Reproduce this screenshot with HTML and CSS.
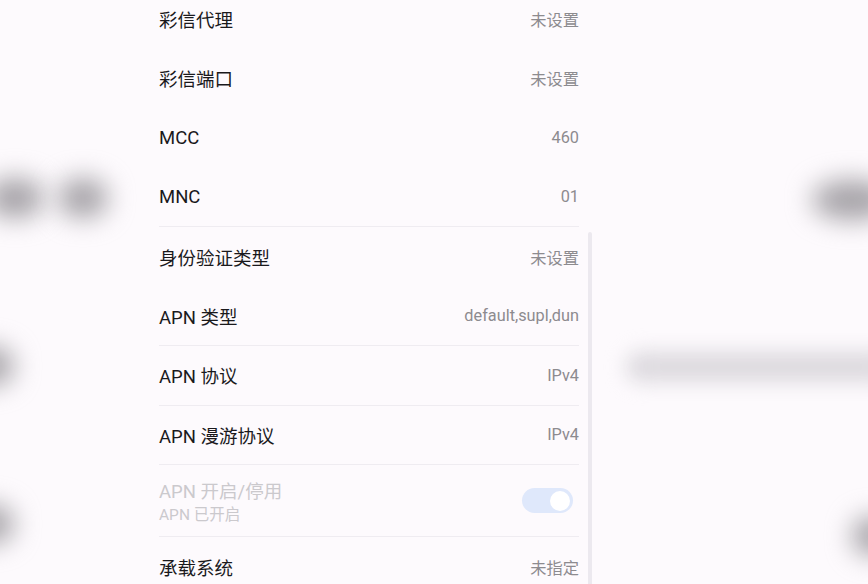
FILE: index.html
```html
<!DOCTYPE html>
<html lang="zh-CN">
<head>
  <meta charset="UTF-8">
  <meta name="viewport" content="width=device-width, initial-scale=1.0">
  <title>APN 设置</title>
  <link rel="stylesheet" href="styles.css">
</head>
<body>
  <!-- blurred zoomed copy behind the phone screen -->
  <div class="backdrop">
    <div class="blob blob-l1a"></div>
    <div class="blob blob-l1b"></div>
    <div class="blob blob-l2"></div>
    <div class="blob blob-l3"></div>
    <div class="blob blob-r1"></div>
    <div class="blob blob-r2 light"></div>
    <div class="blob blob-r3"></div>
  </div>

  <div class="screen">
    <ul class="settings">
      <li class="row">
        <span class="label">彩信代理</span>
        <span class="value">未设置</span>
      </li>
      <li class="row">
        <span class="label">彩信端口</span>
        <span class="value">未设置</span>
      </li>
      <li class="row">
        <span class="label">MCC</span>
        <span class="value">460</span>
      </li>
      <li class="row divided">
        <span class="label">MNC</span>
        <span class="value">01</span>
      </li>
      <li class="row">
        <span class="label">身份验证类型</span>
        <span class="value">未设置</span>
      </li>
      <li class="row divided">
        <span class="label">APN 类型</span>
        <span class="value">default,supl,dun</span>
      </li>
      <li class="row divided">
        <span class="label">APN 协议</span>
        <span class="value">IPv4</span>
      </li>
      <li class="row divided">
        <span class="label">APN 漫游协议</span>
        <span class="value">IPv4</span>
      </li>
      <li class="row tall divided disabled">
        <div class="text">
          <span class="label">APN 开启/停用</span>
          <span class="sub">APN 已开启</span>
        </div>
        <span class="switch on"><span class="knob"></span></span>
      </li>
      <li class="row">
        <span class="label">承载系统</span>
        <span class="value">未指定</span>
      </li>
    </ul>
    <div class="scrollbar"></div>
  </div>
</body>
</html>
```

FILE: styles.css
```css
html, body {
  height: 100%;
}
body {
  margin: 0;
  overflow: hidden;
  background-color: #fdfafd;
  font-family: Roboto, "Noto Sans CJK SC", sans-serif;
  position: relative;
}

/* blurred background smudges */
.backdrop {
  position: absolute;
  inset: 0;
  overflow: hidden;
}
.blob {
  position: absolute;
  height: 40px;
  border-radius: 50%;
  background-color: #a5a2a7;
  filter: blur(13px);
}
.blob.light {
  background-color: #dcd9de;
  height: 30px;
  border-radius: 15px;
  filter: blur(10px);
}
.blob-l1a { left: -14px; top: 178px; width: 58px; }
.blob-l1b { left: 58px; top: 178px; width: 50px; }
.blob-l2 { left: -34px; top: 346px; width: 48px; }
.blob-l3 { left: -34px; top: 504px; width: 48px; }
.blob-r1 { left: 812px; top: 180px; width: 80px; }
.blob-r2 { left: 626px; top: 352px; width: 270px; }
.blob-r3 { left: 852px; top: 516px; width: 44px; }

/* phone screen */
.screen {
  position: relative;
  width: 420px;
  margin-left: 159px;
}
.settings {
  list-style: none;
  margin: -11px 0 0;
  padding: 0;
}
.row {
  height: 59.5px;
  display: flex;
  align-items: center;
  justify-content: space-between;
}
.row.divided {
  border-bottom: 1px solid #efecf1;
  box-sizing: border-box;
}
.row.tall {
  height: 72px;
}
.label {
  font-size: 18.5px;
  color: #1a191c;
}
.value {
  font-size: 16.3px;
  color: #8d8b8f;
}
.text {
  display: flex;
  flex-direction: column;
  padding-top: 2px;
}
.sub {
  font-size: 15.5px;
  line-height: 20px;
  color: #cbc9cd;
}
.row.disabled .label {
  color: #cbc9cd;
  line-height: 26px;
}

.switch {
  width: 51px;
  height: 25px;
  border-radius: 13px;
  background-color: #dfe8fb;
  display: flex;
  align-items: center;
  justify-content: flex-end;
  padding: 0 3px;
  box-sizing: border-box;
  margin-right: 6px;
}
.knob {
  width: 20px;
  height: 20px;
  border-radius: 50%;
  background-color: #ffffff;
}

.scrollbar {
  position: absolute;
  left: 429px;
  top: 243px;
  width: 4px;
  height: 360px;
  border-radius: 2px;
  background-color: #ece9ef;
}
```
